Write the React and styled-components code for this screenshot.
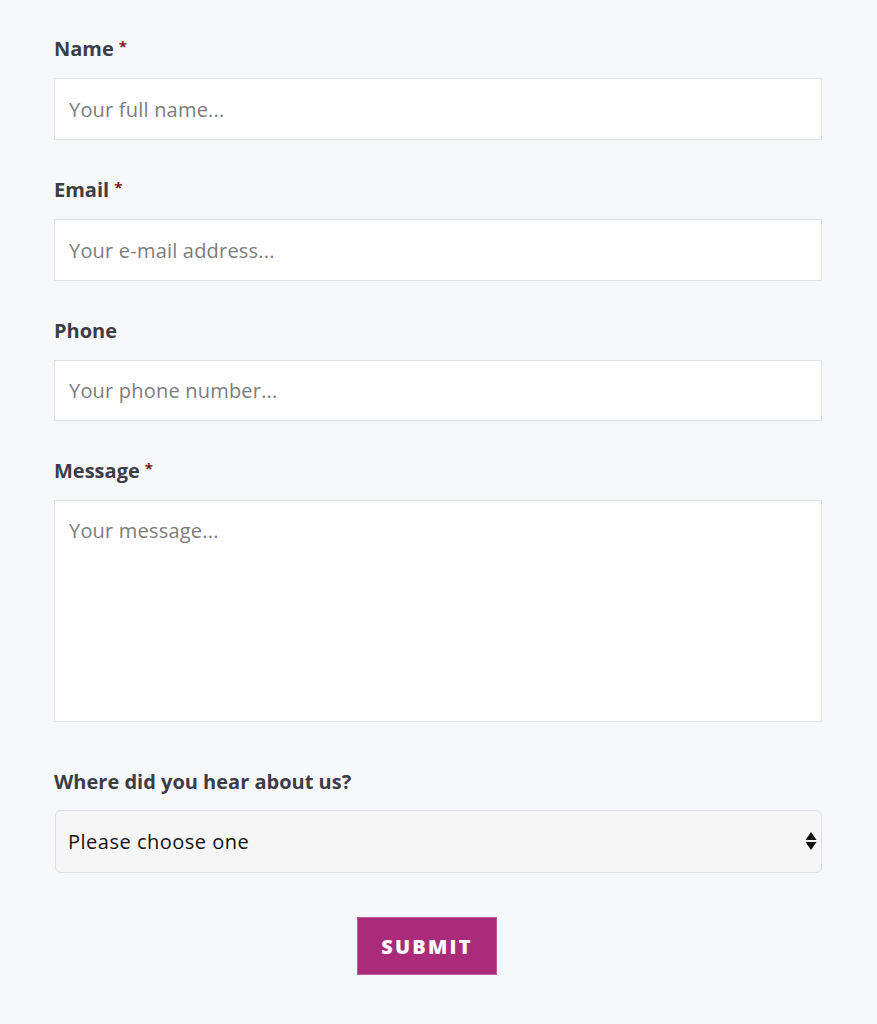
import React from 'react'
import styled, { createGlobalStyle } from 'styled-components'

const GlobalStyle = createGlobalStyle`
  body {
    margin: 0;
    background: #f7f8fa;
    font-family: "Open Sans", Lato, "Liberation Sans", sans-serif;
  }
`

const StyledForm = styled.form`
  width: 768px;
  padding: 37px 0 48px 54px;
`
const StyledField = styled.div`
  display: flex;
  flex-direction: column;
  margin-bottom: ${props => props.gap || 38}px;
`
const StyledLabel = styled.label`
  font-size: 20px;
  line-height: 24px;
  font-weight: 700;
  color: #3b3d47;
  margin-bottom: 17px;
  & span {
    color: #7d1a1a;
    margin-left: 5px;
    font-size: 15px;
    line-height: 18px;
    vertical-align: top;
  }
`
const StyledInput = styled.input`
  box-sizing: border-box;
  width: 100%;
  height: ${props => props.h || 62}px;
  border: 1px solid #dfe1e5;
  background: #fff;
  padding: 0 14px;
  font-family: inherit;
  font-size: 20px;
  letter-spacing: 0.2px;
  color: #333;
  outline: none;
  &::placeholder {
    color: #7c7c7c;
  }
`
const StyledTextarea = styled.textarea`
  display: block;
  box-sizing: border-box;
  width: 100%;
  height: 222px;
  border: 1px solid #dfe1e5;
  background: #fff;
  padding: 16px 14px;
  font-family: inherit;
  font-size: 20px;
  letter-spacing: 0.2px;
  resize: none;
  outline: none;
  &::placeholder {
    color: #7c7c7c;
  }
`
const StyledSelectWrap = styled.div`
  position: relative;
  margin-left: 1px;
  margin-top: -1px;
`
const StyledSelect = styled.select`
  appearance: none;
  box-sizing: border-box;
  width: 100%;
  height: 63px;
  border: 1px solid #dcdee2;
  border-radius: 6px;
  background: #f6f6f6;
  padding: 0 12px;
  font-family: inherit;
  font-size: 20px;
  letter-spacing: 0.5px;
  color: #111;
  outline: none;
`
const StyledArrows = styled.svg`
  position: absolute;
  right: 5px;
  top: 21px;
  pointer-events: none;
`
const StyledActions = styled.div`
  display: flex;
  justify-content: center;
  padding-right: 22px;
`
const StyledButton = styled.button`
  width: 140px;
  height: 58px;
  border: 1px solid #c05a9a;
  background: #a92b7a;
  color: #fff;
  font-family: inherit;
  font-size: 20px;
  font-weight: 800;
  letter-spacing: 2.2px;
  cursor: pointer;
`

const App = () => (
  <>
    <GlobalStyle />
    <StyledForm onSubmit={e => e.preventDefault()}>
      <StyledField>
        <StyledLabel>Name<span>*</span></StyledLabel>
        <StyledInput placeholder="Your full name..." />
      </StyledField>
      <StyledField>
        <StyledLabel>Email<span>*</span></StyledLabel>
        <StyledInput placeholder="Your e-mail address..." />
      </StyledField>
      <StyledField>
        <StyledLabel>Phone</StyledLabel>
        <StyledInput h={61} placeholder="Your phone number..." />
      </StyledField>
      <StyledField gap={48}>
        <StyledLabel>Message<span>*</span></StyledLabel>
        <StyledTextarea placeholder="Your message..." />
      </StyledField>
      <StyledField gap={44}>
        <StyledLabel>Where did you hear about us?</StyledLabel>
        <StyledSelectWrap>
          <StyledSelect defaultValue="">
            <option value="">Please choose one</option>
            <option>Search engine</option>
            <option>Social media</option>
            <option>A friend</option>
          </StyledSelect>
          <StyledArrows width="12" height="20" viewBox="0 0 12 20">
            <path d="M6 1 L11.5 9 H0.5 Z" fill="#111" />
            <path d="M6 19 L11.5 11 H0.5 Z" fill="#111" />
          </StyledArrows>
        </StyledSelectWrap>
      </StyledField>
      <StyledActions>
        <StyledButton type="submit">SUBMIT</StyledButton>
      </StyledActions>
    </StyledForm>
  </>
)

export default App
